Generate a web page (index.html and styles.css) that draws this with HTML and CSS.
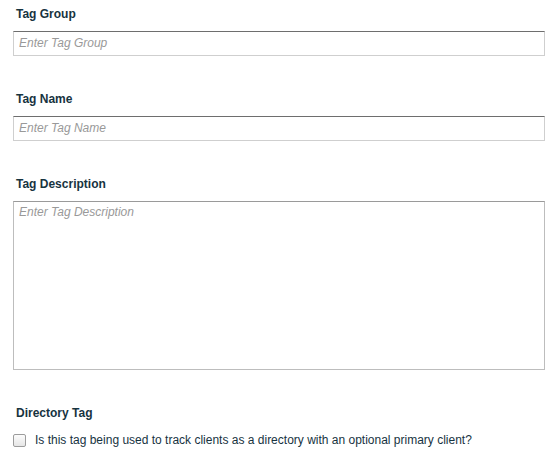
FILE: index.html
```html
<!DOCTYPE html>
<html lang="en">
<head>
    <meta charset="UTF-8">
    <meta name="viewport" content="width=device-width, initial-scale=1.0">
    <title>Tag</title>
    <link rel="stylesheet" href="styles.css">
</head>
<body>
<form id="tagForm">
    <div class="field">
        <label class="fieldLabel" for="tagGroup">Tag Group</label>
        <input type="text" id="tagGroup" class="textInput" placeholder="Enter Tag Group">
    </div>
    <div class="field">
        <label class="fieldLabel" for="tagName">Tag Name</label>
        <input type="text" id="tagName" class="textInput" placeholder="Enter Tag Name">
    </div>
    <div class="field">
        <label class="fieldLabel" for="tagDescription">Tag Description</label>
        <textarea id="tagDescription" class="textArea" placeholder="Enter Tag Description"></textarea>
    </div>
    <div class="field">
        <span class="fieldLabel">Directory Tag</span>
        <label class="checkRow">
            <input type="checkbox" class="checkBox">
            <span>Is this tag being used to track clients as a directory with an optional primary client?</span>
        </label>
    </div>
</form>
</body>
</html>
```

FILE: styles.css
```css
body {
    margin: 0;
    background: #fff;
    font-family: "Liberation Sans", Arial, sans-serif;
    font-size: 12px;
    color: #17333f;
}

#tagForm {
    width: 532px;
    padding: 7px 0 0 13px;
}

.field {
    display: flex;
    flex-direction: column;
    margin-bottom: 36px;
}

.field:last-child {
    margin-bottom: 0;
}

.fieldLabel {
    display: block;
    margin-left: 3px;
    margin-bottom: 10px;
    font-weight: bold;
    line-height: 14px;
}

.textInput,
.textArea {
    box-sizing: border-box;
    width: 100%;
    margin: 0;
    padding: 0 5px 2px;
    font-family: "Liberation Sans", Arial, sans-serif;
    font-size: 12px;
    line-height: 14px;
    color: #333;
    background: #fff;
    border: 1px solid #cfcfcf;
    border-top-color: #6e6e6e;
    border-radius: 0;
    outline: none;
}

.textInput {
    height: 25px;
}

.textArea {
    display: block;
    height: 169px;
    padding-top: 3px;
    resize: none;
    border-color: #bdbdbd;
    border-top-color: #9a9a9a;
}

.textInput::placeholder,
.textArea::placeholder {
    color: #999;
    font-style: italic;
}

.checkRow {
    display: flex;
    align-items: center;
    gap: 9px;
    margin-top: 3px;
    line-height: 14px;
}

.checkBox {
    appearance: none;
    box-sizing: border-box;
    flex: none;
    width: 13px;
    height: 13px;
    margin: 0;
    border: 1px solid #9c9c9c;
    border-radius: 2px;
    background: linear-gradient(#fcfcfc, #e6e6e6);
}
```
